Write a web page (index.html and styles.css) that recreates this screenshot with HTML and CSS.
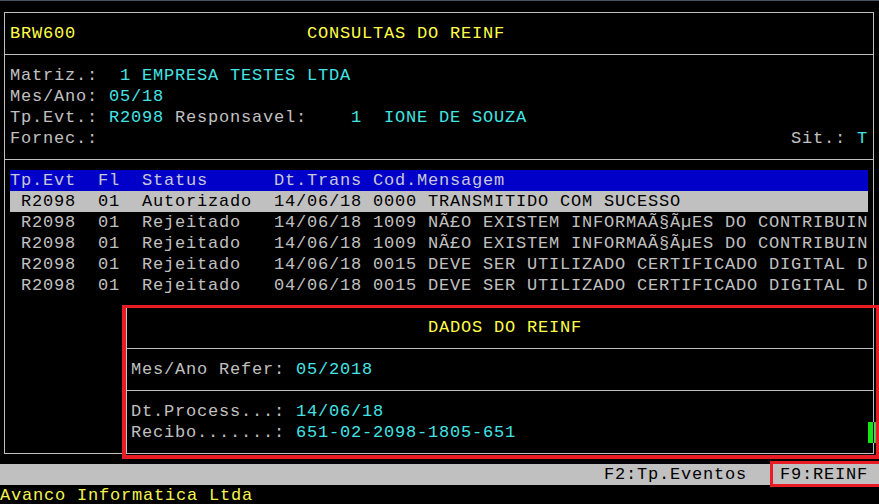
FILE: index.html
```html
<!DOCTYPE html>
<html lang="pt">
<head>
<meta charset="utf-8">
<title>BRW600 - Consultas do REINF</title>
<link rel="stylesheet" href="styles.css">
</head>
<body>
<div class="screen">
  <div class="frame">
    <div class="sec sec-title">
      <div class="ln"><span class="y">BRW600</span>                     <span class="y">CONSULTAS DO REINF</span></div>
    </div>
    <div class="sec sec-info">
      <div class="ln">Matriz.:  <span class="c">1 EMPRESA TESTES LTDA</span></div>
      <div class="ln">Mes/Ano: <span class="c">05/18</span></div>
      <div class="ln">Tp.Evt.: <span class="c">R2098</span> Responsavel:    <span class="c">1  IONE DE SOUZA</span></div>
      <div class="ln split"><span>Fornec.:</span><span>Sit.: <span class="c">T</span></span></div>
    </div>
    <div class="sec sec-list">
      <div class="ln head">Tp.Evt  Fl  Status      Dt.Trans Cod.Mensagem</div>
      <div class="ln sel"> R2098  01  Autorizado  14/06/18 0000 TRANSMITIDO COM SUCESSO</div>
      <div class="ln"> R2098  01  Rejeitado   14/06/18 1009 NÃ£O EXISTEM INFORMAÃ§ÃµES DO CONTRIBUIN</div>
      <div class="ln"> R2098  01  Rejeitado   14/06/18 1009 NÃ£O EXISTEM INFORMAÃ§ÃµES DO CONTRIBUIN</div>
      <div class="ln"> R2098  01  Rejeitado   14/06/18 0015 DEVE SER UTILIZADO CERTIFICADO DIGITAL D</div>
      <div class="ln"> R2098  01  Rejeitado   04/06/18 0015 DEVE SER UTILIZADO CERTIFICADO DIGITAL D</div>
    </div>

    <div class="popup">
      <div class="psec">
        <div class="ln">                           <span class="y">DADOS DO REINF</span></div>
      </div>
      <div class="psec">
        <div class="ln">Mes/Ano Refer: <span class="c">05/2018</span></div>
      </div>
      <div class="psec last">
        <div class="ln">Dt.Process...: <span class="c">14/06/18</span></div>
        <div class="ln">Recibo.......: <span class="c">651-02-2098-1805-651</span></div>
      </div>
      <div class="cursor"></div>
    </div>
  </div>

  <div class="status"><span class="ln">F2:Tp.Eventos   F9:REINF</span></div>
  <div class="ln footer">Avanco Informatica Ltda</div>

  <div class="mark mark-popup"></div>
  <div class="mark mark-f9"></div>
</div>
</body>
</html>
```
FILE: styles.css
```css
html, body {
  margin: 0;
  padding: 0;
  background: #000;
  overflow: hidden;
}

.screen {
  position: relative;
  width: 879px;
  height: 504px;
  box-sizing: border-box;
  border-top: 1px solid #46525e;
  padding-top: 1px;
  font-family: "Liberation Mono", "DejaVu Sans Mono", monospace;
  font-size: 17px;
  letter-spacing: 0.8px;
  color: #c0c0c0;
  overflow: hidden;
}

.ln {
  height: 21px;
  line-height: 21px;
  white-space: pre;
}

.y { color: #ffff48; }
.c { color: #44e4e4; }

/* main window frame */
.frame {
  position: relative;
  box-sizing: border-box;
  margin: 10px 0 0 4px;
  width: 870px;
  height: 442px;
  border: 1px solid #c0c0c0;
  display: flex;
  flex-direction: column;
}

.sec {
  padding: 10px 5px;
  border-bottom: 1px solid #c0c0c0;
}

.sec-list {
  flex: 1;
  border-bottom: none;
}

.split {
  display: flex;
  justify-content: space-between;
}

.head {
  background: #0000c8;
  color: #c8c8d8;
}

.sel {
  background: #c0c0c0;
  color: #000;
}

/* popup window "DADOS DO REINF" */
.popup {
  position: absolute;
  left: 121px;
  top: 293px;
  right: -1px;
  bottom: -1px;
  background: #000;
  border: 1px solid #c0c0c0;
  display: flex;
  flex-direction: column;
}

.psec {
  padding: 10px 4px;
  border-bottom: 1px solid #c0c0c0;
}

.psec.last {
  flex: 1;
  border-bottom: none;
}

.cursor {
  position: absolute;
  left: 741px;
  top: 115px;
  width: 9px;
  height: 21px;
  background: linear-gradient(to right, #14e614 0 5px, #000 5px 6px, #9aa4b0 6px 7px, #14e614 7px 9px);
}

/* status bar */
.status {
  margin-top: 10px;
  height: 21px;
  background: #c0c0c0;
  color: #000;
  display: flex;
  justify-content: flex-end;
  padding-right: 11px;
}

.footer {
  color: #f4f450;
}

/* red annotation rectangles */
.mark {
  position: absolute;
  box-sizing: border-box;
  border: 3px solid #e81c24;
  pointer-events: none;
}

.mark-popup {
  left: 122px;
  top: 304px;
  width: 757px;
  height: 154px;
  border-left-width: 4px;
  border-bottom-width: 4px;
}

.mark-f9 {
  left: 770px;
  top: 460px;
  width: 115px;
  height: 26px;
}
```
